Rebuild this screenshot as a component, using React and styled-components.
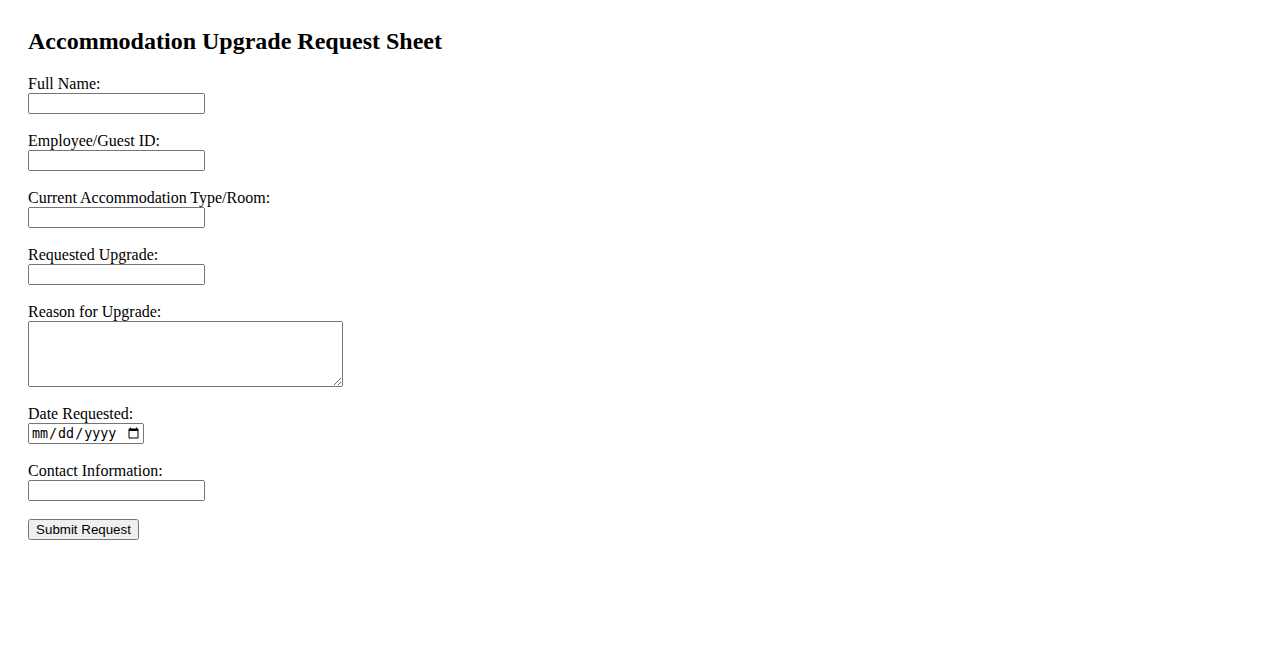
import React from 'react'
import styled, { createGlobalStyle } from 'styled-components'

const GlobalStyle = createGlobalStyle`
  body {
    margin: 0;
    background: #fff;
    color: #000;
    font-family: "Liberation Serif", "Times New Roman", serif;
  }
`

const Page = styled.div`
  padding: 28px;
`

const Title = styled.h2`
  margin: 0 0 20px;
  font-size: 24px;
  line-height: 27px;
  font-weight: bold;
`

const Form = styled.form`
  display: flex;
  flex-direction: column;
  align-items: flex-start;
  gap: 18px;
`

const Field = styled.div`
  display: flex;
  flex-direction: column;
  align-items: flex-start;
`

const Label = styled.label`
  font-size: 16px;
  line-height: 18px;
`

const TextInput = styled.input`
  box-sizing: border-box;
  width: ${p => p.$width || 177}px;
  height: 21px;
  margin: 0;
`

const TextArea = styled.textarea`
  box-sizing: border-box;
  width: 315px;
  height: 66px;
  margin: 0;
`

const Button = styled.button`
  box-sizing: border-box;
  width: 111px;
  height: 21px;
  margin: 0;
  padding: 1px 6px;
  font-family: "Liberation Sans", Arial, sans-serif;
  font-size: 13.33px;
`

const fields = [
  { id: 'name', label: 'Full Name:' },
  { id: 'guestId', label: 'Employee/Guest ID:' },
  { id: 'current', label: 'Current Accommodation Type/Room:' },
  { id: 'upgrade', label: 'Requested Upgrade:' },
]

const App = () => {
  return (
    <Page>
      <GlobalStyle />
      <Title>Accommodation Upgrade Request Sheet</Title>
      <Form onSubmit={ e => e.preventDefault() }>
        { fields.map(f => (
          <Field key={ f.id }>
            <Label htmlFor={ f.id }>{ f.label }</Label>
            <TextInput id={ f.id } type="text" />
          </Field>
        )) }
        <Field>
          <Label htmlFor="reason">Reason for Upgrade:</Label>
          <TextArea id="reason" />
        </Field>
        <Field>
          <Label htmlFor="date">Date Requested:</Label>
          <TextInput id="date" type="date" $width={ 116 } />
        </Field>
        <Field>
          <Label htmlFor="contact">Contact Information:</Label>
          <TextInput id="contact" type="text" />
        </Field>
        <Button type="submit">Submit Request</Button>
      </Form>
    </Page>
  )
}

export default App
